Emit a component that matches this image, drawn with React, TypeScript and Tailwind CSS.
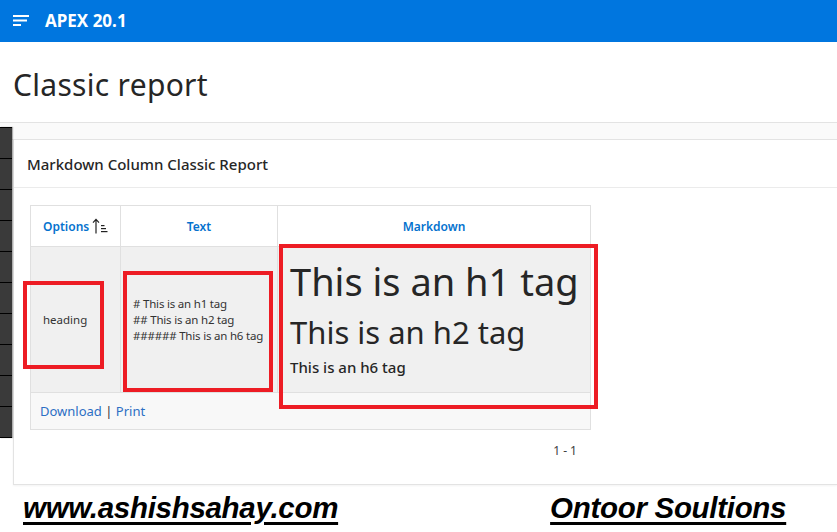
import React from 'react';

const font = { fontFamily: '"Noto Sans", "Open Sans", sans-serif' };

function MenuIcon() {
  return (
    <svg width="18" height="14" viewBox="0 0 18 14" className="block">
      <rect x="0" y="1" width="16" height="2" fill="white" />
      <rect x="0" y="5.5" width="14" height="2" fill="white" />
      <rect x="0" y="10" width="8" height="2" fill="white" />
    </svg>
  );
}

function SortIcon() {
  return (
    <svg width="17" height="16" viewBox="0 0 17 16" className="inline-block ml-[2px] -mt-[3px] align-middle">
      <path d="M5 15.5V1.5M2 4.6L5 1.3l3 3.3" stroke="#222" strokeWidth="1.2" fill="none" />
      <rect x="10" y="7" width="3.5" height="1.2" fill="#222" />
      <rect x="10" y="10" width="5" height="1.2" fill="#222" />
      <rect x="10" y="13" width="6.5" height="1.2" fill="#222" />
    </svg>
  );
}

function SideStrip() {
  const cells = Array.from({ length: 10 });
  return (
    <div className="absolute left-0 top-[127px] w-[12px] flex flex-col border-t border-black bg-[#3a3a3a] shadow-[1px_0_1px_rgba(0,0,0,0.3)]">
      {cells.map((_, i) => (
        <div key={i} className="h-[31px] border-b border-black" />
      ))}
    </div>
  );
}

function ReportTable() {
  return (
    <div className="relative w-[561px]">
      <table className="w-full border-collapse border border-[#e0e0e0] text-[12px]">
        <thead>
          <tr className="h-[41px] bg-white">
            <th className="w-[90px] border border-[#e0e0e0] font-semibold text-[#0572ce] pt-[2px] text-left pl-[12px]">
              Options
              <SortIcon />
            </th>
            <th className="w-[157px] border border-[#e0e0e0] font-semibold text-[#0572ce] pt-[2px]">Text</th>
            <th className="border border-[#e0e0e0] font-semibold text-[#0572ce] pt-[2px]">Markdown</th>
          </tr>
        </thead>
        <tbody>
          <tr className="h-[146px] bg-[#f0f0f0] text-[#333]">
            <td className="border border-[#e0e0e0] pl-[12px] text-[11.5px]">heading</td>
            <td className="border border-[#e0e0e0] pl-[12px] leading-[16px] text-[11.5px] tracking-[-0.2px]">
              <div># This is an h1 tag</div>
              <div>## This is an h2 tag</div>
              <div>###### This is an h6 tag</div>
            </td>
            <td className="border border-[#e0e0e0] pl-[12px] align-top pt-[9px] text-[#262626]">
              <div className="text-[38px] leading-[50px]">This is an h1 tag</div>
              <div className="text-[31px] leading-[42px] mt-[5px]">This is an h2 tag</div>
              <div className="text-[15px] font-medium leading-[24px] mt-[2px]">This is an h6 tag</div>
            </td>
          </tr>
          <tr className="h-[37px] bg-[#f8f8f8]">
            <td colSpan={3} className="border border-[#e0e0e0] pl-[9px] pt-[1px] text-[13px] text-[#2c6fc4]">
              <span>Download</span>
              <span className="text-[#333]"> | </span>
              <span>Print</span>
            </td>
          </tr>
        </tbody>
      </table>
      <div className="absolute left-[-7px] top-[76px] w-[81px] h-[88px] border-[4px] border-[#ed1c24]" />
      <div className="absolute left-[93px] top-[66px] w-[150px] h-[121px] border-[4px] border-[#ed1c24]" />
      <div className="absolute left-[249px] top-[39px] w-[319px] h-[165px] border-[4px] border-[#ed1c24]" />
    </div>
  );
}

export default function App() {
  return (
    <div className="relative w-[837px] h-[532px] overflow-hidden bg-white" style={font}>
      <div className="h-[42px] bg-[#0076df] flex items-center pl-[13px]">
        <MenuIcon />
        <span className="ml-[14px] text-white font-bold text-[17px]">APEX 20.1</span>
      </div>
      <div className="h-[81px] border-b border-[#e3e3e3] flex items-center pl-[13px]">
        <h1 className="text-[30px] text-[#262626] mt-[4px] tracking-[0.3px]">Classic report</h1>
      </div>
      <div className="h-[17px] bg-[#fafafa] border-b border-[#e3e3e3]" />
      <div className="ml-[13px] border-l border-b border-[#e3e3e3] bg-white h-[345px] shadow-[0_1px_2px_rgba(0,0,0,0.05)]">
        <div className="h-[48px] border-b border-[#ebebeb] flex items-center pl-[13px] pt-[2px] text-[15px] font-medium text-[#262626]">
          Markdown Column Classic Report
        </div>
        <div className="pt-[17px] pl-[16px]">
          <ReportTable />
          <div className="w-[561px] text-right pr-[14px] mt-[12px] text-[12px] text-[#404040]">1 - 1</div>
        </div>
      </div>
      <div
        className="flex items-start pt-[1px] font-bold italic underline decoration-[3px] underline-offset-[4px] text-black text-[29.5px]"
        style={{ fontFamily: '"Liberation Sans", Arial, sans-serif' }}
      >
        <span className="ml-[23px] tracking-[-0.3px]">www.ashishsahay.com</span>
        <span className="ml-[212px] tracking-[-0.3px]">Ontoor Soultions</span>
      </div>
      <SideStrip />
    </div>
  );
}
